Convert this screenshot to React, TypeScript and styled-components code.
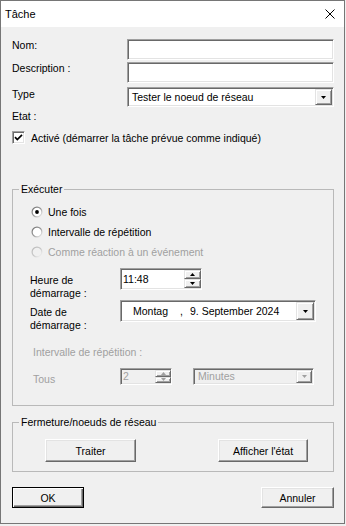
import React from "react";
import styled, { createGlobalStyle, css } from "styled-components";

const GlobalStyle = createGlobalStyle`
  html, body { margin: 0; padding: 0; background: #f0f0f0; }
  body {
    font-family: "Liberation Sans", Arial, sans-serif;
    font-size: 10.5px;
    color: #000;
  }
  * { box-sizing: border-box; }
`;

const sunken = css`
  border: 1px solid;
  border-color: #a0a0a0 #ffffff #ffffff #a0a0a0;
  box-shadow: inset 1px 1px 0 #696969, inset -1px -1px 0 #e3e3e3;
`;

const raised = css`
  border: 1px solid;
  border-color: #e3e3e3 #696969 #696969 #e3e3e3;
  box-shadow: inset 1px 1px 0 #ffffff, inset -1px -1px 0 #a0a0a0;
  background: #f0f0f0;
`;

const Window = styled.div`
  width: 345px;
  height: 524px;
  border: 1px solid #767676;
  background: #f0f0f0;
  display: flex;
  flex-direction: column;
`;

const TitleBar = styled.div`
  height: 26px;
  flex: none;
  background: #ffffff;
  display: flex;
  align-items: center;
  justify-content: space-between;
  padding: 0 9px 0 4px;
`;

const TitleText = styled.span`
  font-size: 11px;
  line-height: 13px;
`;

const Client = styled.div`
  flex: 1;
  display: flex;
  flex-direction: column;
  padding: 12px 10px 0 11px;
`;

const FieldRow = styled.div<{ $mt?: number }>`
  display: flex;
  align-items: flex-start;
  margin-top: ${(p) => p.$mt ?? 0}px;
`;

const FieldLabel = styled.label<{ $w?: number; $pt?: number; $ml?: number; $disabled?: boolean }>`
  flex: none;
  width: ${(p) => (p.$w ? `${p.$w}px` : "auto")};
  padding-top: ${(p) => p.$pt ?? 0}px;
  margin-left: ${(p) => p.$ml ?? 0}px;
  line-height: 13px;
  color: ${(p) => (p.$disabled ? "#a0a0a0" : "#000")};
`;

const TextInput = styled.input`
  width: 207px;
  height: 21px;
  margin: 0;
  padding: 0 3px;
  font: inherit;
  background: #fff;
  outline: none;
  ${sunken};
`;

const Combo = styled.div<{ $w: number; $h: number; $disabled?: boolean }>`
  flex: none;
  display: flex;
  align-items: stretch;
  width: ${(p) => p.$w}px;
  height: ${(p) => p.$h}px;
  padding: 1px;
  background: ${(p) => (p.$disabled ? "#f0f0f0" : "#fff")};
  color: ${(p) => (p.$disabled ? "#a0a0a0" : "#000")};
  ${sunken};
`;

const ComboText = styled.span<{ $pl: number }>`
  flex: 1;
  display: flex;
  align-items: center;
  padding-left: ${(p) => p.$pl}px;
  line-height: 13px;
  white-space: pre;
`;

const DateSep = styled.span<{ $ml: number }>`
  margin-left: ${(p) => p.$ml}px;
`;

const DropBtn = styled.span<{ $w: number }>`
  flex: none;
  width: ${(p) => p.$w}px;
  display: flex;
  align-items: center;
  justify-content: center;
  ${raised};
`;

const SpinBox = styled.div<{ $w: number; $h: number; $disabled?: boolean }>`
  flex: none;
  display: flex;
  align-items: stretch;
  width: ${(p) => p.$w}px;
  height: ${(p) => p.$h}px;
  padding: 1px 0 1px 1px;
  background: ${(p) => (p.$disabled ? "#f0f0f0" : "#fff")};
  color: ${(p) => (p.$disabled ? "#a0a0a0" : "#000")};
  ${sunken};
`;

const SpinText = styled.span`
  flex: 1;
  display: flex;
  align-items: center;
  padding-left: 1px;
  line-height: 13px;
`;

const SpinButtons = styled.span<{ $w: number }>`
  flex: none;
  width: ${(p) => p.$w}px;
  display: flex;
  flex-direction: column;
`;

const SpinBtn = styled.span`
  flex: 1;
  display: flex;
  align-items: center;
  justify-content: center;
  ${raised};
`;

const CheckRow = styled.div<{ $mt: number }>`
  display: flex;
  align-items: center;
  height: 13px;
  margin-top: ${(p) => p.$mt}px;
`;

const CheckBox = styled.span`
  flex: none;
  width: 13px;
  height: 13px;
  background: #fff;
  display: flex;
  align-items: center;
  justify-content: center;
  margin-right: 6px;
  ${sunken};
`;

const Group = styled.fieldset<{ $mt: number }>`
  margin: ${(p) => p.$mt}px 0 0;
  padding: 0;
  min-width: 0;
  border: 1px solid #b9b9b9;
`;

const Legend = styled.legend`
  margin-left: 6px;
  padding: 0 2px;
  line-height: 13px;
  font-size: 10.5px;
`;

const GroupBody = styled.div<{ $pad: string }>`
  display: flex;
  flex-direction: column;
  padding: ${(p) => p.$pad};
`;

const RadioRow = styled.div<{ $mt?: number; $disabled?: boolean }>`
  display: flex;
  align-items: center;
  height: 13px;
  margin-top: ${(p) => p.$mt ?? 0}px;
  padding-left: 1px;
  color: ${(p) => (p.$disabled ? "#a0a0a0" : "#000")};
  gap: 5px;
`;

const ButtonsRow = styled.div<{ $mt?: number }>`
  display: flex;
  justify-content: space-between;
  margin-top: ${(p) => p.$mt ?? 0}px;
`;

const PushButton = styled.button<{ $w: number; $h: number; $default?: boolean }>`
  width: ${(p) => p.$w}px;
  height: ${(p) => p.$h}px;
  margin: 0;
  padding: 0;
  font: inherit;
  color: #000;
  background: #f0f0f0;
  border: 1px solid;
  border-color: #ffffff #696969 #696969 #ffffff;
  box-shadow: inset -1px -1px 0 #a0a0a0, inset 1px 1px 0 #e3e3e3;
  ${(p) =>
    p.$default &&
    css`
      border-color: #000;
      box-shadow: inset 1px 1px 0 #ffffff, inset -1px -1px 0 #696969, inset -2px -2px 0 #a0a0a0;
    `}
`;

const Arrow = ({ up, color = "#000", w = 5, h = 3 }: { up?: boolean; color?: string; w?: number; h?: number }) => (
  <svg width={w} height={h} viewBox={`0 0 ${w} ${h}`} style={{ display: "block" }}>
    <polygon points={up ? `0,${h} ${w},${h} ${w / 2},0` : `0,0 ${w},0 ${w / 2},${h}`} fill={color} />
  </svg>
);

const Radio = ({ checked, disabled }: { checked?: boolean; disabled?: boolean }) => (
  <svg width="12" height="12" viewBox="0 0 12 12" style={{ display: "block", flex: "none" }}>
    <defs>
      <linearGradient id={disabled ? "rgd" : "rg"} x1="0" y1="0" x2="1" y2="1">
        <stop offset="0" stopColor={disabled ? "#b8b8b8" : "#6d6d6d"} />
        <stop offset="0.5" stopColor={disabled ? "#c8c8c8" : "#9a9a9a"} />
        <stop offset="1" stopColor="#ffffff" />
      </linearGradient>
    </defs>
    <circle cx="6" cy="6" r="5.5" fill={`url(#${disabled ? "rgd" : "rg"})`} />
    <circle cx="6" cy="6" r="4.3" fill={disabled ? "#f0f0f0" : "#ffffff"} />
    {checked && <circle cx="6" cy="6" r="1.9" fill="#000" />}
  </svg>
);

export default function App() {
  return (
    <>
      <GlobalStyle />
      <Window>
        <TitleBar>
          <TitleText>Tâche</TitleText>
          <svg width="10" height="10" viewBox="0 0 10 10" style={{ display: "block" }}>
            <path d="M0.5 0.5 L9.5 9.5 M9.5 0.5 L0.5 9.5" stroke="#000" strokeWidth="1" />
          </svg>
        </TitleBar>
        <Client>
          <FieldRow>
            <FieldLabel $w={115}>Nom:</FieldLabel>
            <TextInput readOnly value="" />
          </FieldRow>
          <FieldRow $mt={2}>
            <FieldLabel $w={115}>Description :</FieldLabel>
            <TextInput readOnly value="" />
          </FieldRow>
          <FieldRow $mt={4}>
            <FieldLabel $w={115} $pt={1}>Type</FieldLabel>
            <Combo $w={207} $h={20}>
              <ComboText $pl={3}>Tester le noeud de réseau</ComboText>
              <DropBtn $w={17}>
                <Arrow />
              </DropBtn>
            </Combo>
          </FieldRow>
          <FieldRow $mt={3}>
            <FieldLabel>Etat :</FieldLabel>
          </FieldRow>
          <CheckRow $mt={8}>
            <CheckBox>
              <svg width="9" height="9" viewBox="0 0 9 9" style={{ display: "block" }}>
                <polyline points="1,4.2 3.3,6.6 8,1.8" fill="none" stroke="#000" strokeWidth="1.7" />
              </svg>
            </CheckBox>
            <span>Activé (démarrer la tâche prévue comme indiqué)</span>
          </CheckRow>

          <Group $mt={39}>
            <Legend>Exécuter</Legend>
            <GroupBody $pad="9px 0 19px 17px">
              <RadioRow>
                <Radio checked />
                <span>Une fois</span>
              </RadioRow>
              <RadioRow $mt={7}>
                <Radio />
                <span>Intervalle de répétition</span>
              </RadioRow>
              <RadioRow $mt={7} $disabled>
                <Radio disabled />
                <span>Comme réaction à un événement</span>
              </RadioRow>
              <FieldRow $mt={10}>
                <FieldLabel $w={90} $pt={6}>
                  Heure de
                  <br />
                  démarrage :
                </FieldLabel>
                <SpinBox $w={82} $h={22}>
                  <SpinText>11:48</SpinText>
                  <SpinButtons $w={17}>
                    <SpinBtn>
                      <Arrow up w={5} h={3} />
                    </SpinBtn>
                    <SpinBtn>
                      <Arrow w={5} h={3} />
                    </SpinBtn>
                  </SpinButtons>
                </SpinBox>
              </FieldRow>
              <FieldRow>
                <FieldLabel $w={90} $pt={6}>
                  Date de
                  <br />
                  démarrage :
                </FieldLabel>
                <Combo $w={196} $h={22}>
                  <ComboText $pl={11}>
                    <span>Montag</span>
                    <DateSep $ml={12}>,</DateSep>
                    <DateSep $ml={7}>9. September 2024</DateSep>
                  </ComboText>
                  <DropBtn $w={18}>
                    <Arrow />
                  </DropBtn>
                </Combo>
              </FieldRow>
              <FieldRow $mt={14}>
                <FieldLabel $ml={3} $disabled>
                  Intervalle de répétition :
                </FieldLabel>
              </FieldRow>
              <FieldRow $mt={9}>
                <FieldLabel $w={87} $ml={3} $pt={5} $disabled>
                  Tous
                </FieldLabel>
                <SpinBox $w={52} $h={17} $disabled>
                  <SpinText>2</SpinText>
                  <SpinButtons $w={16}>
                    <SpinBtn>
                      <Arrow up color="#a0a0a0" />
                    </SpinBtn>
                    <SpinBtn>
                      <Arrow color="#a0a0a0" />
                    </SpinBtn>
                  </SpinButtons>
                </SpinBox>
                <div style={{ width: 21, flex: "none" }} />
                <Combo $w={121} $h={17} $disabled>
                  <ComboText $pl={3}>Minutes</ComboText>
                  <DropBtn $w={16}>
                    <Arrow color="#a0a0a0" />
                  </DropBtn>
                </Combo>
              </FieldRow>
            </GroupBody>
          </Group>

          <Group $mt={10}>
            <Legend>Fermeture/noeuds de réseau</Legend>
            <GroupBody $pad="10px 25px 9px 32px">
              <ButtonsRow>
                <PushButton $w={91} $h={23}>Traiter</PushButton>
                <PushButton $w={90} $h={23}>Afficher l'état</PushButton>
              </ButtonsRow>
            </GroupBody>
          </Group>

          <ButtonsRow $mt={15}>
            <PushButton $w={72} $h={21} $default>OK</PushButton>
            <PushButton $w={73} $h={21}>Annuler</PushButton>
          </ButtonsRow>
        </Client>
      </Window>
    </>
  );
}
